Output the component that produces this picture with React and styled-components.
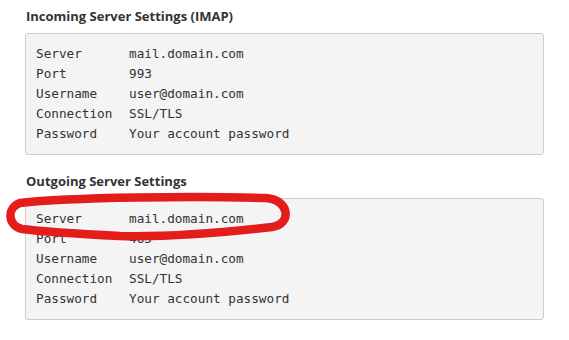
import React from "react";
import styled, { createGlobalStyle } from "styled-components";

const GlobalStyle = createGlobalStyle`
  body {
    margin: 0;
    background: #ffffff;
    font-family: "Open Sans", "Noto Sans", sans-serif;
  }
`;

const Page = styled.div`
  position: relative;
  width: 569px;
  height: 340px;
  padding: 8px 25px 0 25px;
  box-sizing: border-box;
`;

const Section = styled.section`
  margin-bottom: 18px;
`;

const Heading = styled.h3`
  margin: 0 0 8px 1px;
  font-size: 13px;
  font-weight: 700;
  line-height: 17px;
  color: #333333;
`;

const SettingsBox = styled.div`
  display: grid;
  grid-template-columns: 93px 1fr;
  padding: 10px;
  background: #f4f4f4;
  border: 1px solid #cccccc;
  border-radius: 3px;
  font-family: "DejaVu Sans Mono", "Liberation Mono", monospace;
  font-size: 12.7px;
  line-height: 20px;
  color: #333333;
`;

const Cell = styled.span`
  white-space: pre;
`;

const Annotation = styled.svg`
  position: absolute;
  left: 0;
  top: 0;
  pointer-events: none;
`;

const incoming = [
  ["Server", "mail.domain.com"],
  ["Port", "993"],
  ["Username", "user@domain.com"],
  ["Connection", "SSL/TLS"],
  ["Password", "Your account password"],
];

const outgoing = [
  ["Server", "mail.domain.com"],
  ["Port", "465"],
  ["Username", "user@domain.com"],
  ["Connection", "SSL/TLS"],
  ["Password", "Your account password"],
];

const Settings = ({ title, rows }) => (
  <Section>
    <Heading>{title}</Heading>
    <SettingsBox>
      {rows.map(([k, v]) => (
        <React.Fragment key={k}>
          <Cell>{k}</Cell>
          <Cell>{v}</Cell>
        </React.Fragment>
      ))}
    </SettingsBox>
  </Section>
);

export default function App() {
  return (
    <>
      <GlobalStyle />
      <Page>
        <Settings title="Incoming Server Settings (IMAP)" rows={incoming} />
        <Settings title="Outgoing Server Settings" rows={outgoing} />
        {/* hand-drawn red circle around the outgoing server row */}
        <Annotation width="569" height="340" viewBox="0 0 569 340">
          <path
            d="M 22 229 C 8 226 6 208 20 203 C 70 197 200 196 266 198 C 290 200 292 224 272 227 C 220 233 160 237 120 236 C 80 234 45 232 22 229 Z"
            fill="none"
            stroke="#e41c1c"
            strokeWidth="8.5"
            strokeLinejoin="round"
          />
        </Annotation>
      </Page>
    </>
  );
}
